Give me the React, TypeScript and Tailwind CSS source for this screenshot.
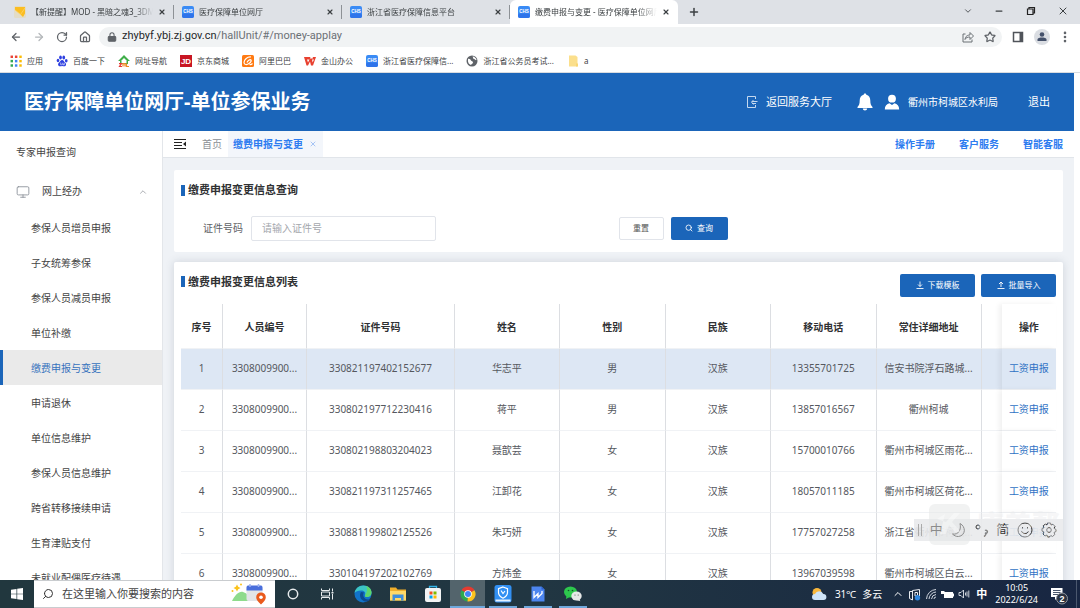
import type { ReactNode } from 'react';
import {
  ArrowLeft,
  ArrowRight,
  ChevronDown,
  ChevronUp,
  Home,
  Lock,
  Minus,
  Monitor,
  MoreVertical,
  Plus,
  RotateCw,
  Search,
  Star,
  X,
} from 'lucide-react';

const sideItems = [
  '参保人员增员申报',
  '子女统筹参保',
  '参保人员减员申报',
  '单位补缴',
  '缴费申报与变更',
  '申请退休',
  '单位信息维护',
  '参保人员信息维护',
  '跨省转移接续申请',
  '生育津贴支付',
  '未就业配偶医疗待遇',
];

const columns = ['序号', '人员编号', '证件号码', '姓名', '性别', '民族', '移动电话', '常住详细地址'];

const rows = [
  ['1', '3308009900...', '330821197402152677', '华志平', '男', '汉族', '13355701725', '信安书院浮石路城...'],
  ['2', '3308009900...', '330802197712230416', '蒋平', '男', '汉族', '13857016567', '衢州柯城'],
  ['3', '3308009900...', '330802198803204023', '聂歆芸', '女', '汉族', '15700010766', '衢州市柯城区雨花...'],
  ['4', '3308009900...', '330821197311257465', '江卸花', '女', '汉族', '18057011185', '衢州市柯城区荷花...'],
  ['5', '3308009900...', '330881199802125526', '朱巧妍', '女', '汉族', '17757027258', '浙江省衢州市柯城...'],
  ['6', '3308009900...', '330104197202102769', '方炜金', '女', '汉族', '13967039598', '衢州市柯城区白云...'],
];

function ChsIcon() {
  return (
    <svg viewBox="0 0 24 24" className="size-3 shrink-0">
      <rect width="24" height="24" rx="4" fill="#3a8bf5" />
      <rect y="15" width="24" height="9" rx="4" fill="#2f74ea" />
      <text x="12" y="14" fontSize="9" fontWeight="bold" textAnchor="middle" fill="#fff" fontFamily="Liberation Sans, sans-serif">CHS</text>
    </svg>
  );
}

function MailIcon() {
  return (
    <svg viewBox="0 0 24 24" className="size-3 shrink-0">
      <rect width="24" height="24" rx="3" fill="#e3dcc6" />
      <path d="M2 2h20v13l-4 7-5-5-11-9z" fill="#fbbd22" />
      <path d="M2 8l11 9 9-13" fill="none" stroke="#fdd66a" strokeWidth="1.5" />
    </svg>
  );
}

function AppsIcon() {
  const fills = ['#ea4335', '#ea4335', '#fbbc04', '#34a853', '#4285f4', '#fbbc04', '#34a853', '#4285f4', '#fbbc04'];
  return (
    <svg viewBox="0 0 22 22" className="size-3 shrink-0">
      {fills.map((fill, i) => (
        <rect key={i} x={1 + (i % 3) * 8} y={1 + Math.floor(i / 3) * 8} width="4.5" height="4.5" fill={fill} />
      ))}
    </svg>
  );
}

function PawIcon() {
  return (
    <svg viewBox="0 0 24 24" className="size-3 shrink-0" fill="#2d3fe0">
      <ellipse cx="4" cy="11" rx="2.6" ry="3.6" />
      <ellipse cx="9" cy="5" rx="2.7" ry="3.8" />
      <ellipse cx="15.5" cy="5" rx="2.7" ry="3.8" />
      <ellipse cx="20.5" cy="11.5" rx="2.6" ry="3.6" />
      <path d="M12.2 10c3 0 4 3.500 6.300 5.500 2.800 2.500 1.800 7-2 7-1.700 0-2.700-.6-4.300-.6s-2.600.6-4.400.6c-3.800 0-4.700-4.600-2-7C8.200 13.500 9.200 10 12.200 10z" />
      <path d="M9.500 15v4.500h2M13.500 15.500v4h3v-4" fill="none" stroke="#fff" strokeWidth="1.300" />
    </svg>
  );
}

function HouseNavIcon() {
  return (
    <svg viewBox="0 0 24 24" className="size-3 shrink-0">
      <path d="M12 0L0 12h4v6h16v-6h4z" fill="#3fae49" />
      <path d="M12 6l-5 5v5h10v-5z" fill="#fff" />
      <path d="M2 17h5l-4 6h5" fill="none" stroke="#e53935" strokeWidth="2.500" />
      <path d="M10 23v-6h4v6M17 17v6h5" fill="none" stroke="#f08a24" strokeWidth="2.500" />
    </svg>
  );
}

function JdIcon() {
  return (
    <svg viewBox="0 0 24 24" className="size-3 shrink-0">
      <rect width="24" height="24" fill="#c81623" />
      <text x="12" y="18" fontSize="16" fontWeight="bold" textAnchor="middle" fill="#fff" fontFamily="Liberation Sans, sans-serif">JD</text>
    </svg>
  );
}

function AliIcon() {
  return (
    <svg viewBox="0 0 24 24" className="size-3 shrink-0">
      <rect width="24" height="24" rx="3" fill="#ff7a12" />
      <path d="M18 4C11 3 4 9 4 15c0 5 6 5 10 2 3-2 5-5 4-7-2-2-7 2-8 5M15 19c3 1 5-1 6-2" fill="none" stroke="#fff" strokeWidth="2.400" />
    </svg>
  );
}

function WpsIcon() {
  return (
    <svg viewBox="0 0 24 24" className="size-3 shrink-0">
      <path d="M0 4h13l-2 5H6l2 6 4-8h4l1 8 3-6h-4l2-5h6l-6 17h-4l-2-8-4 8H5z" fill="#e8402f" />
    </svg>
  );
}

function GlobeIcon() {
  return (
    <svg viewBox="0 0 24 24" className="size-3 shrink-0">
      <circle cx="12" cy="12" r="11" fill="#5f6368" />
      <path d="M4 8c3-1 5 1 6 3s4 1 4 4-3 2-4 5c-4-1-7-5-6-12zM13 3c2 2 0 4 3 5s3 3 5 2c0-3-4-7-8-7z" fill="#fff" />
    </svg>
  );
}

function FolderIcon() {
  return (
    <svg viewBox="0 0 24 24" className="size-3 shrink-0">
      <path d="M4 1h13l4 3v19H4z" fill="#fbdf8c" />
      <path d="M18 17h4v6h-4z" fill="#f9d672" />
    </svg>
  );
}

const tabs = [
  { title: '【新提醒】MOD - 黑暗之魂3_3DM', icon: <MailIcon />, active: false },
  { title: '医疗保障单位网厅', icon: <ChsIcon />, active: false },
  { title: '浙江省医疗保障信息平台', icon: <ChsIcon />, active: false },
  { title: '缴费申报与变更 - 医疗保障单位网厅', icon: <ChsIcon />, active: true },
];

const bookmarks = [
  { title: '应用', icon: <AppsIcon /> },
  { title: '百度一下', icon: <PawIcon /> },
  { title: '网址导航', icon: <HouseNavIcon /> },
  { title: '京东商城', icon: <JdIcon /> },
  { title: '阿里巴巴', icon: <AliIcon /> },
  { title: '金山办公', icon: <WpsIcon /> },
  { title: '浙江省医疗保障信...', icon: <ChsIcon /> },
  { title: '浙江省公务员考试...', icon: <GlobeIcon /> },
  { title: 'a', icon: <FolderIcon /> },
];

function BrowserChrome() {
  return (
    <div className="shrink-0 bg-white text-[#3c4043]">
      <div className="flex h-6 bg-[#dee1e6] pl-1.5">
        {tabs.map((tab) => (
          <div
            key={tab.title}
            className={`flex w-[168px] items-center gap-[5px] pl-2 ${tab.active ? 'rounded-t-md bg-white' : ''}`}
          >
            {tab.icon}
            <span className="min-w-0 flex-1 overflow-hidden whitespace-nowrap text-[8px] [mask-image:linear-gradient(to_right,black_85%,transparent)]">{tab.title}</span>
            <button type="button" aria-label="关闭标签页" className="mr-[2px]">
              <X className="size-2" strokeWidth={3.5} />
            </button>
            <span className={`h-3.5 w-px ${tab.active ? '' : 'bg-[#8d9196]'}`} />
          </div>
        ))}
        <button type="button" aria-label="新标签页" className="ml-2.5">
          <Plus className="size-3" strokeWidth={3} />
        </button>
        <div className="ml-auto flex w-32 items-center justify-around pb-0.5">
          <button type="button" aria-label="搜索标签页"><ChevronDown className="size-2.5" strokeWidth={2} /></button>
          <button type="button" aria-label="最小化"><Minus className="size-2.5" strokeWidth={3} /></button>
          <button type="button" aria-label="还原">
            <svg viewBox="0 0 10 10" className="size-2.5" fill="none" stroke="#222" strokeWidth="1.2">
              <path d="M1.500 3h5.500v5.500h-5.500zM3 3V1.500h5.500V7H7" />
            </svg>
          </button>
          <button type="button" aria-label="关闭"><X className="size-3" strokeWidth={2} /></button>
        </div>
      </div>

      <div className="flex h-[25px] items-center pl-2.5 pr-2">
        <div className="flex gap-[11px] text-[#5f6368]">
          <button type="button" aria-label="后退"><ArrowLeft className="size-3" strokeWidth={2.5} /></button>
          <button type="button" aria-label="前进"><ArrowRight className="size-3 text-[#b4b7ba]" strokeWidth={2.5} /></button>
          <button type="button" aria-label="刷新"><RotateCw className="size-3" strokeWidth={2.5} /></button>
          <button type="button" aria-label="主页"><Home className="size-3" strokeWidth={2.5} /></button>
        </div>
        <div className="ml-2 flex h-5 flex-1 items-center rounded-full bg-[#f1f3f4] pl-2 pr-1.5">
          <Lock className="size-2.5 text-[#5f6368] [&>rect]:fill-current" strokeWidth={2.5} />
          <p className="ml-[5px] flex-1 font-['Roboto','Noto_Sans_CJK_SC',sans-serif] text-[11px] text-[#6b7075]">
            <span className="text-[#26282b]">zhybyf.ybj.zj.gov.cn</span>/hallUnit/#/money-applay
          </p>
          <button type="button" aria-label="分享">
            <svg viewBox="0 0 24 24" className="size-3" fill="none" stroke="#6b7075" strokeWidth="2">
              <path d="M7 6H2v16h18v-5M6 17c1-7 5-9 10-9V3l7 7-7 7v-5c-5 0-8 1-10 5z" />
            </svg>
          </button>
          <button type="button" aria-label="收藏" className="ml-2.5"><Star className="size-3 text-[#5f6368]" strokeWidth={2.5} /></button>
        </div>
        <button type="button" aria-label="侧边栏" className="ml-2.5">
          <svg viewBox="0 0 12 12" className="size-3" fill="none" stroke="#50545a" strokeWidth="1.500">
            <rect x="1.500" y="1.500" width="9" height="9" />
            <path d="M9 2v8" strokeWidth="3" />
          </svg>
        </button>
        <button type="button" aria-label="用户" className="ml-2.5 flex size-4 items-center justify-center rounded-full bg-[#dadde2]">
          <svg viewBox="0 0 12 12" className="size-3" fill="#44516a">
            <circle cx="6" cy="3.500" r="2.300" />
            <path d="M1.500 10V8.500C1.500 7 4 6.500 6 6.500s4.500.5 4.500 2V10z" />
          </svg>
        </button>
        <button type="button" aria-label="更多" className="ml-2"><MoreVertical className="size-3.5 text-[#5f6368]" strokeWidth={2.5} /></button>
      </div>

      <div className="flex h-6 items-center gap-[13px] border-b border-[#d9dce0] pl-2.5">
        {bookmarks.map((item) => (
          <a key={item.title} href="#" className="flex items-center gap-[5px] whitespace-nowrap text-[8px]">
            {item.icon}
            {item.title}
          </a>
        ))}
      </div>
    </div>
  );
}

function Header() {
  return (
    <header className="flex h-[58px] shrink-0 items-center bg-[#1b65b9] px-6 text-white">
      <h1 className="text-xl font-bold">医疗保障单位网厅-单位参保业务</h1>
      <a href="#" className="ml-auto flex items-center gap-2 text-[11px]">
        <svg viewBox="0 0 12 14" className="h-3.5 w-3" fill="none" stroke="#c4d8ef">
          <path d="M9.500 4V1.500h-8v11h8V10M6 6.500h5.500M6 8.500h4M7.500 5L5.500 7l2 2.500" />
        </svg>
        返回服务大厅
      </a>
      <a href="#" aria-label="消息" className="ml-[25px]">
        <svg viewBox="0 0 16 18" className="h-[18px] w-4" fill="#fff">
          <path d="M8 .5c.8 0 1.300.5 1.300 1.200C12 2.300 13.300 4.500 13.300 7.500c0 3.500.7 5 2.200 6.500v1H.5v-1c1.500-1.500 2.200-3 2.200-6.500C2.700 4.500 4 2.300 6.700 1.700 6.700 1 7.200.5 8 .5zM5.800 15.500h4.400c0 1.200-1 2-2.200 2s-2.200-.8-2.200-2z" />
        </svg>
      </a>
      <a href="#" className="ml-[11px] flex items-center gap-2 text-[10px]">
        <svg viewBox="0 0 16 16" className="size-4" fill="#fff">
          <circle cx="8" cy="4.700" r="3.900" />
          <path d="M.8 15.500c0-3.500 2-5.800 4.700-6.200L8 11l2.500-1.700c2.700.4 4.700 2.700 4.700 6.200z" />
        </svg>
        衢州市柯城区水利局
      </a>
      <a href="#" className="ml-[30px] text-[11px]">退出</a>
    </header>
  );
}

function Sidebar() {
  return (
    <nav className="w-[163px] shrink-0 overflow-hidden border-r border-[#e3e6ea] bg-white text-[10px] text-[#444]">
      <a href="#" className="flex h-[42px] items-center pl-4">专家申报查询</a>
      <button type="button" className="flex h-[37px] w-full items-center pl-4 pr-3.5">
        <Monitor className="size-3.5 text-[#8c9199]" strokeWidth={1.5} />
        <span className="ml-3">网上经办</span>
        <ChevronUp className="ml-auto size-2.5 text-[#9a9da3]" strokeWidth={2} />
      </button>
      {sideItems.map((item) => (
        <a
          key={item}
          href="#"
          className={`flex h-[35px] items-center border-l-3 pl-7 pt-0.5 ${
            item === '缴费申报与变更' ? 'border-[#1b65b9] bg-[#eaeaea] text-[#3672bd]' : 'border-transparent'
          }`}
        >
          {item}
        </a>
      ))}
    </nav>
  );
}

function SectionTitle({ children }: { children: ReactNode }) {
  return (
    <h2 className="flex items-center gap-[3px] text-[11px] font-bold text-[#303133]">
      <span className="h-[11px] w-1 bg-[#1b65b9]" />
      {children}
    </h2>
  );
}

function TabBar() {
  return (
    <div className="flex h-[27px] shrink-0 items-center border-b border-[#e1e5ea] bg-white pl-[11px] pr-[11px] text-[10px]">
      <button type="button" aria-label="收起菜单">
        <svg viewBox="0 0 12 12" className="size-3" fill="none" stroke="#222" strokeWidth="1.200">
          <path d="M0 1.500h12M0 4.500h8M0 7.500h8M0 10.500h12" />
          <path d="M12 3.500v5L9 6z" fill="#222" stroke="none" />
        </svg>
      </button>
      <a href="#" className="ml-4 text-[#8b8f95]">首页</a>
      <span className="ml-1.5 flex h-[26px] items-center bg-[#f3f6fb] pl-[5px] pr-1.5 font-bold text-[#2d7cf0]">
        缴费申报与变更
        <button type="button" aria-label="关闭" className="ml-1.5"><X className="size-2 text-[#7fabf2]" /></button>
      </span>
      <div className="ml-auto flex gap-6 font-bold text-[#2d7cf0]">
        <a href="#">操作手册</a>
        <a href="#">客户服务</a>
        <a href="#">智能客服</a>
      </div>
    </div>
  );
}

function QueryCard() {
  return (
    <section className="rounded-xs bg-white px-[7px] pb-[11px] pt-3">
      <SectionTitle>缴费申报变更信息查询</SectionTitle>
      <form className="mt-[17px] grid grid-cols-2 items-center">
        <div className="flex items-center pl-[22px]">
          <label htmlFor="cert" className="text-[10px] text-[#606266]">证件号码</label>
          <input
            id="cert"
            placeholder="请输入证件号"
            className="ml-2 h-[25px] w-[185px] rounded-xs border border-[#e1e4ea] px-2.5 text-[10px] placeholder:text-[#a4a7ad]"
          />
        </div>
        <div className="flex gap-[7px]">
          <button type="reset" className="h-[23px] w-[45px] rounded-xs border border-[#e1e4ea] text-[8px] text-[#555]">重置</button>
          <button type="button" className="flex h-[23px] w-[57px] items-center justify-center gap-1 rounded-xs bg-[#1b65b9] text-[8px] text-white">
            <Search className="size-2" strokeWidth={2.5} />
            查询
          </button>
        </div>
      </form>
    </section>
  );
}

function TransferIcon({ d }: { d: string }) {
  return (
    <svg viewBox="0 0 8 8" className="size-2" fill="none" stroke="#fff" strokeWidth="0.9">
      <path d={d} />
    </svg>
  );
}

function ListCard() {
  return (
    <section className="mt-2.5 rounded-xs bg-white px-[7px] pt-3 shadow-[0_0_8px_rgba(60,80,100,0.18)]">
      <div className="flex h-[30px] items-start">
        <SectionTitle>缴费申报变更信息列表</SectionTitle>
        <div className="ml-auto flex gap-1.5 text-[8px] text-white">
          <button type="button" className="flex h-[23px] w-[75px] items-center justify-center gap-1 rounded-xs bg-[#1b65b9]">
            <TransferIcon d="M.5 7.500h7M4 .5v5M2 3.500l2 2 2-2" />
            下载模板
          </button>
          <button type="button" className="flex h-[23px] w-[75px] items-center justify-center gap-1 rounded-xs bg-[#1b65b9]">
            <TransferIcon d="M.5 7.500h7M4 6V1M2 3l2-2 2 2" />
            批量导入
          </button>
        </div>
      </div>
      <table className="w-full table-fixed border-separate border-spacing-0 text-center text-[10px] text-[#55585e]">
        <colgroup>
          <col className="w-[4.8%]" />
          <col className="w-[9.6%]" />
          <col className="w-[16.9%]" />
          <col className="w-[12%]" />
          <col className="w-[12.1%]" />
          <col className="w-[12%]" />
          <col className="w-[12.1%]" />
          <col className="w-[12%]" />
          <col className="w-[2.3%]" />
          <col className="w-[6.2%]" />
        </colgroup>
        <thead className="text-[#303133]">
          <tr className="h-[45px]">
            {columns.map((title) => (
              <th key={title} className="whitespace-nowrap border-b border-r border-b-[#f0f2f5] border-r-[#dcdee2] p-0 pt-1">{title}</th>
            ))}
            <th className="border-b border-[#f0f2f5] p-0" />
            <th className="border-b border-[#f0f2f5] bg-white p-0 pt-1 shadow-[-3px_0_5px_rgba(0,0,0,0.06)]">操作</th>
          </tr>
        </thead>
        <tbody>
          {rows.map((row, i) => (
            <tr key={row[0]} className={`h-[41px] ${i === 0 ? 'bg-[#dde7f4]' : 'bg-white'}`}>
              {row.map((cell, j) => (
                <td key={j} className="whitespace-nowrap border-b border-r border-b-[#f0f2f5] border-r-[#dcdee2] p-0">{cell}</td>
              ))}
              <td className="border-b border-[#f0f2f5] p-0" />
              <td className={`border-b border-[#f0f2f5] p-0 shadow-[-3px_0_5px_rgba(0,0,0,0.06)] ${i === 0 ? 'bg-[#dde7f4]' : 'bg-white'}`}>
                <a href="#" className="text-[#2f72c4]">工资申报</a>
              </td>
            </tr>
          ))}
        </tbody>
      </table>
    </section>
  );
}

// Floating input method bar with the translucent stamp above it
function ImeBar() {
  return (
    <>
      <div className="absolute bottom-[67px] right-[17px] flex h-[22px] w-[149px] items-center justify-between bg-[#e9eaec]/90 pl-1 pr-1.5 text-[13px] text-[#333]">
        <span className="h-3 w-1 border-x border-[#aaa]" />
        <span>中</span>
        <svg viewBox="0 0 16 16" className="size-4" fill="none" stroke="#333">
          <path d="M9 1.500c6 3 6 12-1.500 13-2.500.2-4.500-1-6-2.500 6 1 9-4 7.500-10.500z" />
        </svg>
        <svg viewBox="0 0 14 14" className="size-3.5" fill="none" stroke="#333">
          <circle cx="3" cy="4" r="2" />
          <path d="M10 7.500a1.500 1.500 0 1 1 0 2.500c1.500.5 1 2-1 3.500" strokeWidth="1.400" />
        </svg>
        <span>简</span>
        <svg viewBox="0 0 16 16" className="size-4" fill="none" stroke="#333">
          <circle cx="8" cy="8" r="7" />
          <path d="M4.500 9c1 3.500 6 3.500 7 0M5.500 5v1.500M10.500 5v1.500" />
        </svg>
        <svg viewBox="0 0 16 16" className="size-4" fill="none" stroke="#333">
          <path d="M6.500 1h3l.5 2 2-.8 2 2.300-1 1.800 2 1.200v2l-2 1 .8 2-2.300 2-1.700-1-1.300 1.500h-2L6 13l-2 1-2-2 1-2-2-1V6.500l2-.7-.8-2 2.300-1.800L6 3z" />
          <circle cx="8" cy="8" r="2.300" />
        </svg>
      </div>
      <div className="absolute bottom-[63px] right-5 flex items-center gap-1.5 text-[28px] font-black leading-none text-[#ebecee]/45">
        <svg viewBox="0 0 41 41" className="size-[41px]">
          <rect width="41" height="41" rx="6" fill="#e4e5e6" fillOpacity="0.5" />
          <path d="M8 15l8-5-5 20h6l3-9 6 7h6l-9-10 8-9h-6l-8 9" fill="#fff" fillOpacity="0.4" />
        </svg>
        <span aria-hidden="true">康美帮</span>
      </div>
    </>
  );
}

function TaskButton({ label, state, children }: { label: string; state?: 'open' | 'active'; children: ReactNode }) {
  return (
    <button
      type="button"
      aria-label={label}
      className={`flex w-[35px] flex-col items-center pt-1 ${state === 'active' ? 'bg-[#53646c]' : ''}`}
    >
      {children}
      {state && <span className={`mt-auto h-0.5 bg-[#6fa8dc] ${state === 'active' ? 'w-full' : 'w-7'}`} />}
    </button>
  );
}

function Taskbar() {
  return (
    <footer className="flex h-7 shrink-0 bg-linear-to-r from-[#21373e] via-[#213642] to-[#182642] text-white">
      <button type="button" aria-label="开始" className="flex w-[34px] items-center justify-center">
        <svg viewBox="0 0 12 12" className="size-3" fill="#fff">
          <path d="M0 1.700l5.500-.8v4.800H0zM6.200.8L12 0v5.700H6.200zM0 6.300h5.500v4.800L0 10.300zM6.200 6.300H12V12l-5.800-.8z" />
        </svg>
      </button>
      <label className="flex w-[241px] items-center border-y border-[#c9cccf] bg-white px-2">
        <Search className="size-3 -scale-x-100 text-[#333]" strokeWidth={2} />
        <input aria-label="搜索" placeholder="在这里输入你要搜索的内容" className="ml-2 w-0 flex-1 text-[11px] text-[#333] placeholder:text-[#444]" />
        <svg viewBox="0 0 36 22" className="h-[22px] w-9">
          <path d="M1 18C4 12 8 8 12 9s7 4 9 9z" fill="#8edb8c" />
          <path d="M6 1.500l1.200 2.300 2.300 1.200-2.300 1.200L6 8.500 4.800 6.200 2.500 5l2.300-1.200z" fill="#fbc31c" />
          <circle cx="10" cy="1.500" r="1" fill="#fbc31c" />
          <circle cx="1.500" cy="8" r="1" fill="#fbc31c" />
          <rect x="15.500" y="4" width="16" height="14" rx="2" fill="#e2e4e8" />
          <path d="M15.500 7.500V4.500c0-1.500 1-2 2-2h12c1 0 2 .5 2 2v3z" fill="#4a6fdc" />
          <path d="M19 1v3M27.500 1v3" stroke="#9db2f0" strokeWidth="1.500" />
          <path d="M30 21.500c-3-3-4.800-5-4.800-7.300a4.800 4.800 0 0 1 9.600 0c0 2.300-1.800 4.300-4.800 7.300z" fill="#ea5a1c" />
          <circle cx="30" cy="14.200" r="1.800" fill="#fff" />
        </svg>
      </label>
      <div className="flex">
        <TaskButton label="Cortana">
          <svg viewBox="0 0 20 20" className="size-5"><circle cx="10" cy="10" r="4.700" fill="none" stroke="#e8ecee" strokeWidth="1.500" /></svg>
        </TaskButton>
        <TaskButton label="任务视图">
          <svg viewBox="0 0 20 20" className="size-5" fill="none" stroke="#e8ecee">
            <path d="M3.500 4.500v2h8v-2M3.500 15.500v-2h8v2M3.500 8h8v4h-8zM14.500 4.500v3M14.500 10v5.500" />
            <path d="M13.500 8h2v1.500h-2z" fill="#e8ecee" stroke="none" />
          </svg>
        </TaskButton>
        <TaskButton label="Edge">
          <svg viewBox="0 0 20 20" className="size-5">
            <circle cx="10" cy="10" r="8.500" fill="#1273c8" />
            <path d="M1.600 9C2 4.500 6 1.500 10.500 1.500c5 0 8 3.500 8 7 0 3-2.300 4.500-4.500 4.500-1.500 0-2.500-.8-2-1.800C13 8 11 6.500 8 6.500 5 6.500 2.500 7.500 1.600 9z" fill="#3cc5c4" />
            <path d="M13 2c3.500 1 5.500 3.800 5.500 6.500 0 3-2.300 4.500-4.500 4.500-1.500 0-2.500-.8-2-1.800C14 8.500 15 5 13 2z" fill="#5fd66c" />
            <path d="M8 8c-2 3-1 8 4 9.500 2 .3 4-.5 5.500-2.500-3 1-6 0-7-2.500-.5-1.500-.3-3 .5-4z" fill="#0c4a90" />
          </svg>
        </TaskButton>
        <TaskButton label="文件资源管理器">
          <svg viewBox="0 0 20 20" className="size-5">
            <path d="M2 3.500h6l1.500 2H18v11H2z" fill="#f0ae2b" />
            <path d="M2 7h16v9.500H2z" fill="#ffd868" />
            <path d="M4.500 10.500h11v6H13V14H7v2.500H4.500z" fill="#3f8edc" />
          </svg>
        </TaskButton>
        <TaskButton label="应用商店">
          <svg viewBox="0 0 20 20" className="size-5">
            <path d="M6.500 5V2.500h7V5" fill="none" stroke="#35b5e8" strokeWidth="1.300" />
            <rect x="2" y="4" width="16" height="14" rx="2" fill="#f3f4f5" />
            <path d="M6.500 7.500h3v3h-3z" fill="#f25022" />
            <path d="M10.500 7.500h3v3h-3z" fill="#7fba00" />
            <path d="M6.500 11.500h3v3h-3z" fill="#00a4ef" />
            <path d="M10.500 11.500h3v3h-3z" fill="#ffb900" />
          </svg>
        </TaskButton>
        <TaskButton label="Chrome" state="active">
          <svg viewBox="0 0 20 20" className="size-5">
            <path d="M10 10L3.500 6.200A7.500 7.500 0 0 1 16.500 6.200z" fill="#e53b30" />
            <path d="M10 10L3.500 6.200A7.500 7.500 0 0 0 9.500 17.500z" fill="#2da94f" />
            <path d="M10 10l6.500-3.800A7.500 7.500 0 0 1 9.500 17.500z" fill="#fcc31e" />
            <circle cx="10" cy="10" r="3.800" fill="#fff" />
            <circle cx="10" cy="10" r="3" fill="#4285f4" />
          </svg>
        </TaskButton>
        <TaskButton label="安全卫士" state="open">
          <svg viewBox="0 0 20 20" className="size-5">
            <rect x="1.500" y="1" width="17" height="17.500" rx="2.500" fill="#3290f3" />
            <path d="M2.500 15.500h15v2h-15z" fill="#e5f1fd" />
            <path d="M10 3l4.500 1.700v3.800c0 2.700-2 4.500-4.500 5.700-2.500-1.200-4.500-3-4.500-5.700V4.700z" fill="none" stroke="#fff" strokeWidth="1.200" />
            <path d="M8 6.500l2 3 2-2.500" fill="none" stroke="#fff" strokeWidth="1.200" />
          </svg>
        </TaskButton>
        <TaskButton label="WPS" state="open">
          <svg viewBox="0 0 20 20" className="size-5">
            <path d="M3.500 2.500h10l3 3v12h-13z" fill="#4d86f0" />
            <path d="M13.500 2.500l3 3h-3z" fill="#2b5fc9" />
            <path d="M6 7v6.500l4-4v4l4-4V7" fill="none" stroke="#fff" strokeWidth="1.300" />
          </svg>
        </TaskButton>
        <TaskButton label="微信" state="open">
          <svg viewBox="0 0 20 20" className="size-5">
            <ellipse cx="7.500" cy="8" rx="6.500" ry="5.500" fill="#2dc84d" />
            <path d="M3.500 11.500L3 15l3.500-2z" fill="#2dc84d" />
            <ellipse cx="13.500" cy="12" rx="5.200" ry="4.500" fill="#e6e8e8" />
            <path d="M16 15l1.500 2.300L13 16z" fill="#e6e8e8" />
            <circle cx="5.500" cy="6.500" r=".8" fill="#14502a" />
            <circle cx="9.500" cy="6.500" r=".8" fill="#14502a" />
            <circle cx="12" cy="11" r=".6" fill="#555" />
            <circle cx="15.200" cy="11" r=".6" fill="#555" />
          </svg>
        </TaskButton>
      </div>
      <div className="ml-auto flex items-center whitespace-nowrap text-[10px]">
        <svg viewBox="0 0 16 14" className="mr-2 h-3.5 w-4">
          <circle cx="6" cy="5.500" r="4.500" fill="#f9b73c" />
          <path d="M4 13a3 3 0 0 1 0-6 4.500 4.500 0 0 1 8.300 0A3 3 0 0 1 12.500 13z" fill="#cfe4f8" />
        </svg>
        <span>31℃</span>
        <span className="ml-1.5">多云</span>
        <div className="ml-2.5 flex items-center gap-1">
          <ChevronUp className="size-3" />
          <svg viewBox="0 0 13 13" className="size-[13px]" fill="none" stroke="#e8ebf0">
            <path d="M1.500 3.500h3M1.500 3.500v7l3 1.500M4.500 2.500v9.500M4.500 2.500l7-1V8" />
            <path d="M7 4.500h2.500V8H7z" />
            <circle cx="9.500" cy="9.700" r="2.700" fill="#2f86dd" stroke="none" />
          </svg>
          <svg viewBox="0 0 12 12" className="size-3" fill="none" stroke="#cfd5de">
            <path d="M1.500 11A10 10 0 0 1 11 1.500M4 11a7.500 7.500 0 0 1 7-7M6.500 11A5 5 0 0 1 11 6.500M9 11a2 2 0 0 1 2-2" />
          </svg>
          <svg viewBox="0 0 13 12" className="h-3 w-[13px]" fill="#fff">
            <path d="M3 4h9v6H3zM12 5.500h1v3h-1zM1 1v3M0 3h3.500v3H0z" />
          </svg>
          <svg viewBox="0 0 12 12" className="size-3" fill="none" stroke="#dfe3ea" strokeWidth="0.9">
            <path d="M1 4.500h2L5.500 2v8L3 7.500H1zM7.500 4.500v3M9 3.500v5M10.800 2.500v7" />
          </svg>
        </div>
        <span className="ml-1.5 text-[11px] font-bold">中</span>
        <div className="ml-2 text-center text-[9px] leading-[12px]">
          <div>10:05</div>
          <div>2022/6/24</div>
        </div>
        <button type="button" aria-label="通知" className="ml-3 mr-2 mt-1">
          <svg viewBox="0 0 18 18" className="size-[18px]">
            <path d="M1 1h11.500v9H8l-3 3v-3H1z" fill="#fff" />
            <path d="M3 3.500h7.500M3 5.500h7.500M3 7.500h7.500" stroke="#1b2b46" strokeWidth=".8" />
            <circle cx="12" cy="11.500" r="5.500" fill="#2b3341" stroke="#8e949e" />
            <text x="12" y="15" fontSize="9" textAnchor="middle" fontWeight="bold" fill="#fff" fontFamily="Liberation Sans, sans-serif">2</text>
          </svg>
        </button>
        <span className="mr-[3px] h-full w-px bg-[#4b586e]" />
      </div>
    </footer>
  );
}

export default function App() {
  return (
    <div lang="zh-CN" className="relative flex h-screen flex-col overflow-hidden bg-white font-['Noto_Sans','Noto_Sans_CJK_SC',sans-serif]">
      <BrowserChrome />
      <div className="flex min-h-0 flex-1 flex-col pr-1.5">
        <Header />
        <div className="flex min-h-0 flex-1">
          <Sidebar />
          <main className="flex min-w-0 flex-1 flex-col bg-[#eff2f6]">
            <TabBar />
            <div className="min-h-0 flex-1 overflow-hidden px-[11px] pt-3">
              <QueryCard />
              <ListCard />
            </div>
          </main>
        </div>
      </div>
      <Taskbar />
      <ImeBar />
    </div>
  );
}
